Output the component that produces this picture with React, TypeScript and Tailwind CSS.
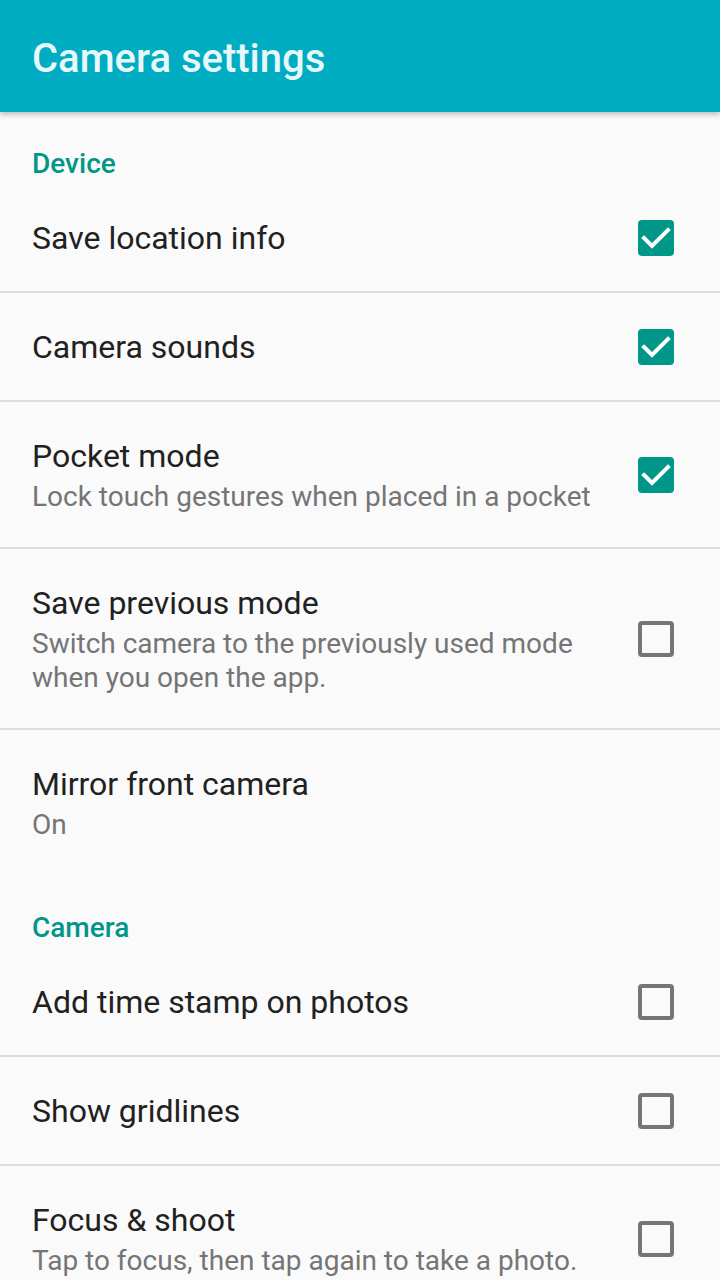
import React from 'react'

type Item = {
  title: string
  summary?: string
  checked?: boolean
  divider?: boolean
}

const device: Item[] = [
  { title: 'Save location info', checked: true, divider: true },
  { title: 'Camera sounds', checked: true, divider: true },
  { title: 'Pocket mode', summary: 'Lock touch gestures when placed in a pocket', checked: true, divider: true },
  {
    title: 'Save previous mode',
    summary: 'Switch camera to the previously used mode when you open the app.',
    checked: false,
    divider: true,
  },
  { title: 'Mirror front camera', summary: 'On' },
]

const camera: Item[] = [
  { title: 'Add time stamp on photos', checked: false, divider: true },
  { title: 'Show gridlines', checked: false, divider: true },
  { title: 'Focus & shoot', summary: 'Tap to focus, then tap again to take a photo.', checked: false },
]

const Checkbox = ({ checked }: { checked: boolean }) =>
  checked ? (
    <div className="w-[36px] h-[36px] rounded-[4px] bg-[#009688]">
      <svg width="36" height="36" viewBox="0 0 36 36" fill="none">
        <path d="M6 18l8 8L30 10" stroke="white" strokeWidth="4" strokeLinecap="square" />
      </svg>
    </div>
  ) : (
    <div className="w-[36px] h-[36px] rounded-[4px] border-[4px] border-[#757575]" />
  )

const Category = ({ label }: { label: string }) => (
  <div className="shrink-0 h-[72px] pl-[32px] pt-[36px]">
    <div className="text-[28px] leading-[32px] font-medium text-[#009688]">{label}</div>
  </div>
)

const Row = ({ item, last }: { item: Item; last?: boolean }) => (
  <div className={`shrink-0 ${item.divider ? 'border-b-2 border-[#dedede]' : ''}`}>
    <div
      className={`flex items-center pl-[32px] pt-[33px] ${
        last ? 'pb-[34px]' : item.summary ? 'pb-[33px]' : 'pb-[32px]'
      }`}
    >
      <div className="flex-1 pr-[32px]">
        <div className="text-[32px] leading-[42px] text-[#212121]">{item.title}</div>
        {item.summary && (
          <div className="mt-[3px] text-[28px] leading-[34px] text-[#757575]">{item.summary}</div>
        )}
      </div>
      {item.checked !== undefined && (
        <div className="mr-[46px]">
          <Checkbox checked={item.checked} />
        </div>
      )}
    </div>
  </div>
)

export default function App() {
  return (
    <div
      className="w-[720px] h-[1280px] overflow-hidden bg-[#fafafa] flex flex-col"
      style={{ fontFamily: 'Roboto, "Noto Sans", sans-serif' }}
    >
      <header className="relative z-10 h-[112px] shrink-0 bg-[#00acc1] flex items-center pl-[32px] shadow-[0_2px_6px_rgba(0,0,0,0.28)]">
        <h1 className="mt-[5px] text-[40px] leading-[48px] font-medium text-[#e8f8fa]">Camera settings</h1>
      </header>
      <Category label="Device" />
      {device.map((item, i) => (
        <Row key={item.title} item={item} last={i === device.length - 1} />
      ))}
      <Category label="Camera" />
      {camera.map((item) => (
        <Row key={item.title} item={item} />
      ))}
    </div>
  )
}
